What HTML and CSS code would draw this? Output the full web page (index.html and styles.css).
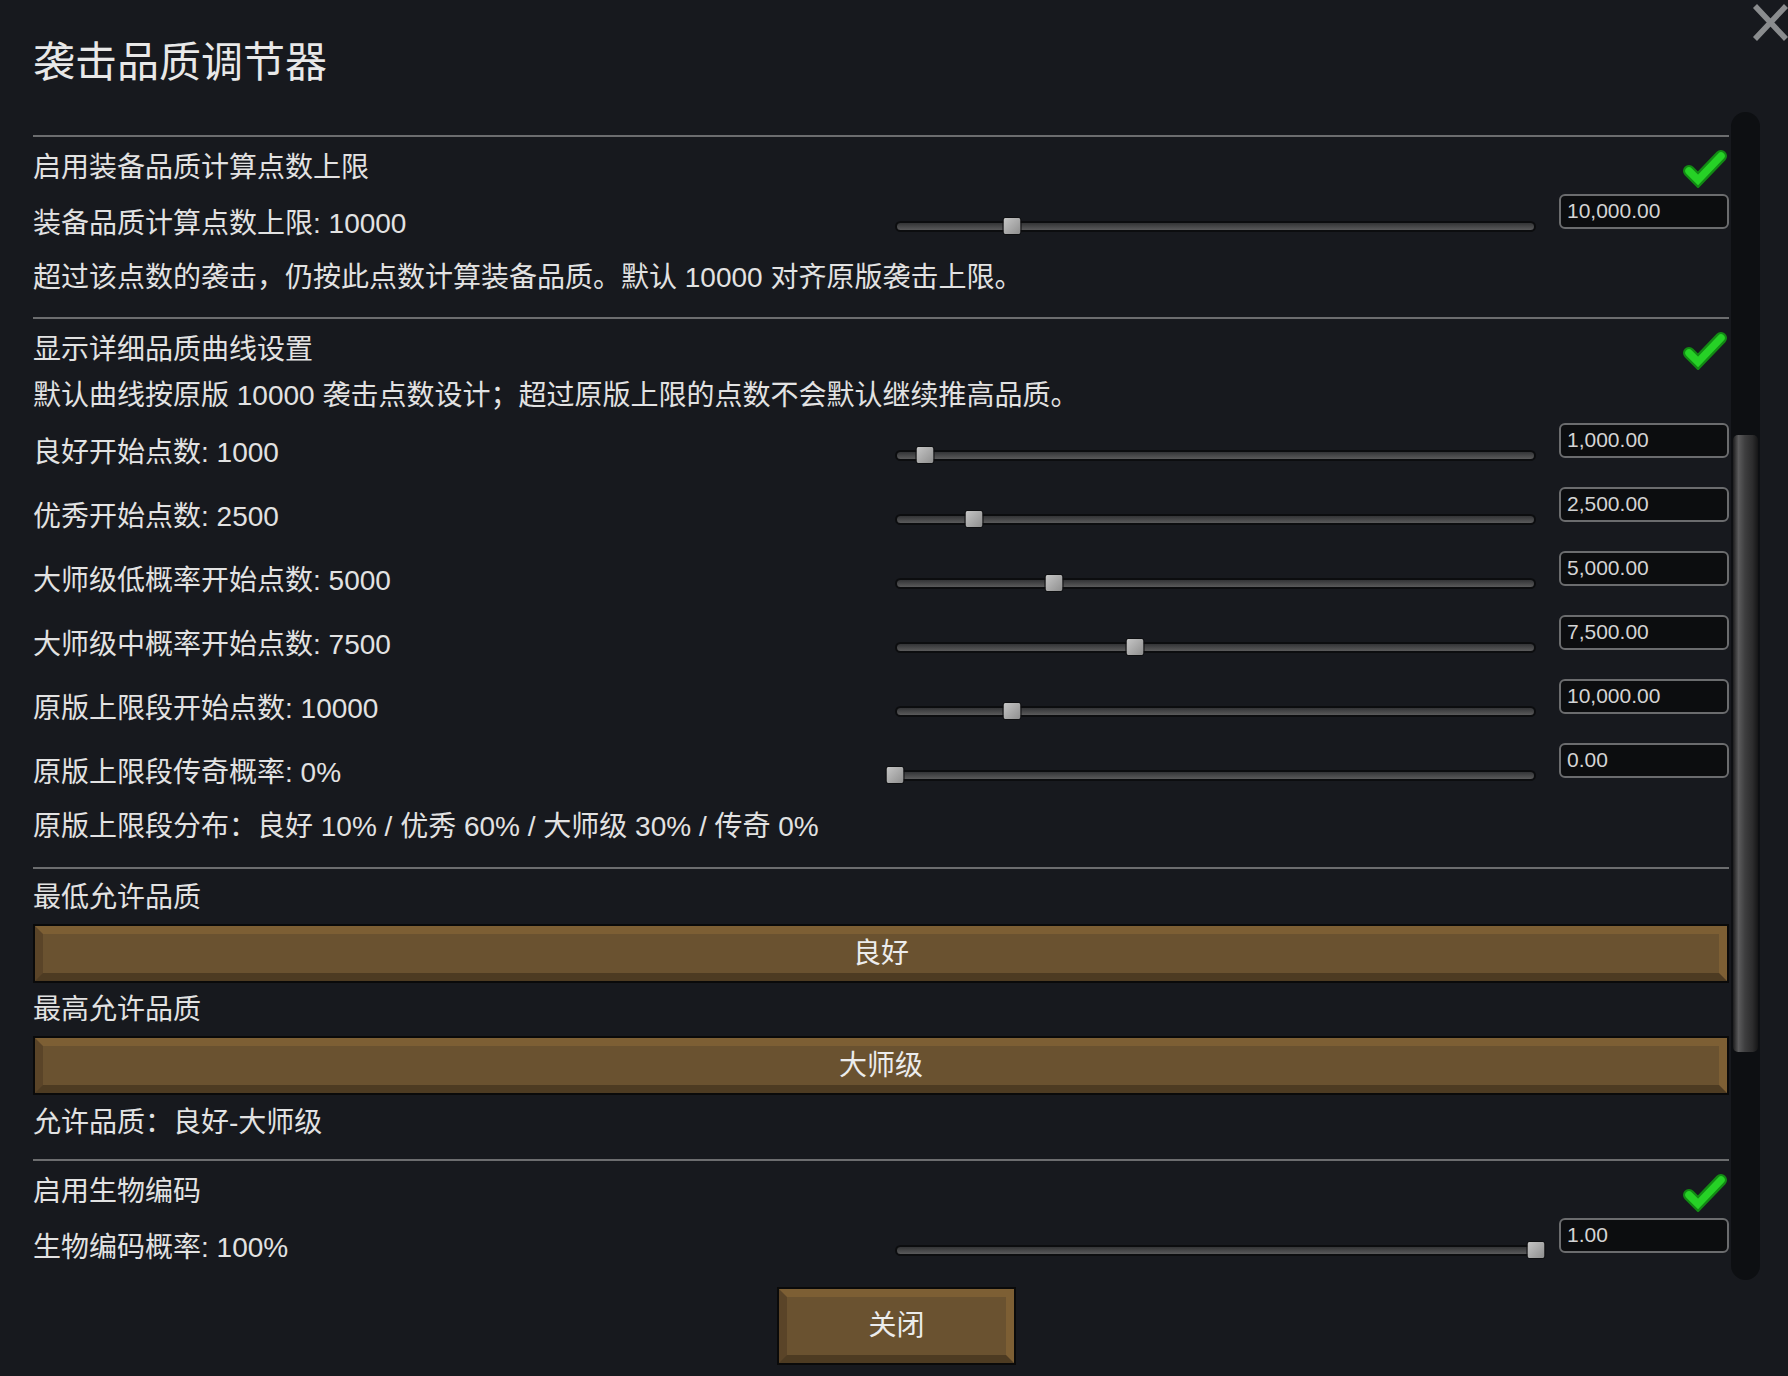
FILE: index.html
```html
<!DOCTYPE html>
<html lang="zh-CN">
<head>
    <meta charset="UTF-8">
    <title>袭击品质调节器</title>
    <link rel="stylesheet" href="styles.css">
</head>
<body>
    <div class="window">
        <svg class="close-x" width="36" height="38" viewBox="0 0 36 38">
            <path d="M3 3 L34 36 M34 3 L3 36" stroke="#8a8c8e" stroke-width="5.5" fill="none"/>
        </svg>

        <h1 class="title">袭击品质调节器</h1>

        <div class="scroll-view">
            <div class="listing">
                <div class="divider first"></div>

                <div class="check-row">
                    <span>启用装备品质计算点数上限</span>
                    <svg class="check" width="46" height="40" viewBox="0 0 46 40">
                        <polyline points="7,23 16,32 39,8" stroke="#128a14" stroke-width="12" stroke-linecap="round" stroke-linejoin="miter" fill="none"/>
                        <polyline points="7,23 16,32 39,8" stroke="#26d126" stroke-width="7.5" stroke-linecap="round" stroke-linejoin="miter" fill="none"/>
                    </svg>
                </div>

                <div class="slider-row">
                    <span class="slider-label">装备品质计算点数上限: 10000</span>
                    <div class="slider"><div class="track"></div><div class="thumb" style="left: 18.2%"></div></div>
                    <div class="num-field">10,000.00</div>
                </div>

                <div class="desc">超过该点数的袭击，仍按此点数计算装备品质。默认 10000 对齐原版袭击上限。</div>

                <div class="divider"></div>

                <div class="check-row">
                    <span>显示详细品质曲线设置</span>
                    <svg class="check" width="46" height="40" viewBox="0 0 46 40">
                        <polyline points="7,23 16,32 39,8" stroke="#128a14" stroke-width="12" stroke-linecap="round" stroke-linejoin="miter" fill="none"/>
                        <polyline points="7,23 16,32 39,8" stroke="#26d126" stroke-width="7.5" stroke-linecap="round" stroke-linejoin="miter" fill="none"/>
                    </svg>
                </div>

                <div class="curve-note">默认曲线按原版 10000 袭击点数设计；超过原版上限的点数不会默认继续推高品质。</div>

                <div class="slider-row">
                    <span class="slider-label">良好开始点数: 1000</span>
                    <div class="slider"><div class="track"></div><div class="thumb" style="left: 4.7%"></div></div>
                    <div class="num-field">1,000.00</div>
                </div>
                <div class="slider-row">
                    <span class="slider-label">优秀开始点数: 2500</span>
                    <div class="slider"><div class="track"></div><div class="thumb" style="left: 12.3%"></div></div>
                    <div class="num-field">2,500.00</div>
                </div>
                <div class="slider-row">
                    <span class="slider-label">大师级低概率开始点数: 5000</span>
                    <div class="slider"><div class="track"></div><div class="thumb" style="left: 24.8%"></div></div>
                    <div class="num-field">5,000.00</div>
                </div>
                <div class="slider-row">
                    <span class="slider-label">大师级中概率开始点数: 7500</span>
                    <div class="slider"><div class="track"></div><div class="thumb" style="left: 37.4%"></div></div>
                    <div class="num-field">7,500.00</div>
                </div>
                <div class="slider-row">
                    <span class="slider-label">原版上限段开始点数: 10000</span>
                    <div class="slider"><div class="track"></div><div class="thumb" style="left: 18.2%"></div></div>
                    <div class="num-field">10,000.00</div>
                </div>
                <div class="slider-row">
                    <span class="slider-label">原版上限段传奇概率: 0%</span>
                    <div class="slider"><div class="track"></div><div class="thumb" style="left: 0%"></div></div>
                    <div class="num-field">0.00</div>
                </div>

                <div class="dist-note">原版上限段分布：良好 10% / 优秀 60% / 大师级 30% / 传奇 0%</div>

                <div class="divider"></div>

                <div class="quality-label first">最低允许品质</div>
                <div class="btn quality-btn">良好</div>
                <div class="quality-label">最高允许品质</div>
                <div class="btn quality-btn">大师级</div>
                <div class="allowed">允许品质：良好-大师级</div>

                <div class="divider tight"></div>

                <div class="check-row">
                    <span>启用生物编码</span>
                    <svg class="check" width="46" height="40" viewBox="0 0 46 40">
                        <polyline points="7,23 16,32 39,8" stroke="#128a14" stroke-width="12" stroke-linecap="round" stroke-linejoin="miter" fill="none"/>
                        <polyline points="7,23 16,32 39,8" stroke="#26d126" stroke-width="7.5" stroke-linecap="round" stroke-linejoin="miter" fill="none"/>
                    </svg>
                </div>

                <div class="slider-row">
                    <span class="slider-label">生物编码概率: 100%</span>
                    <div class="slider"><div class="track"></div><div class="thumb" style="left: 100%"></div></div>
                    <div class="num-field">1.00</div>
                </div>
            </div>

            <div class="scrollbar">
                <div class="scroll-thumb"></div>
            </div>
        </div>

        <div class="footer">
            <div class="btn close-btn">关闭</div>
        </div>
    </div>
</body>
</html>
```

FILE: styles.css
```css
body {
    margin: 0;
    padding: 0;
    background-color: #17191e;
    color: #e2e2e2;
    font-family: "Liberation Sans", "Noto Sans CJK SC", sans-serif;
    font-size: 28px;
}
.window {
    position: relative;
    width: 1788px;
    height: 1376px;
    padding-left: 33px;
    box-sizing: border-box;
    overflow: hidden;
}
.close-x {
    position: absolute;
    top: 3px;
    right: 0;
}
.title {
    margin: 0;
    height: 112px;
    padding-top: 38px;
    box-sizing: border-box;
    font-size: 42px;
    font-weight: normal;
    line-height: 50px;
    color: #e8e8e8;
}
.scroll-view {
    display: flex;
    height: 1168px;
    overflow: hidden;
}
.listing {
    width: 1696px;
    flex-shrink: 0;
}
.divider {
    height: 2px;
    margin-top: 20px;
    background-color: #6c6d6f;
}
.divider.first {
    margin-top: 23px;
}
.divider.tight {
    margin-top: 14px;
}
.check-row {
    display: flex;
    justify-content: space-between;
    align-items: center;
    height: 57px;
    padding-bottom: 2px;
    box-sizing: border-box;
}
.check {
    display: block;
    margin-top: 6px;
    margin-right: 1px;
}
.slider-row {
    display: flex;
    height: 64px;
}
.slider-label {
    flex: 0 0 862px;
    align-self: center;
    margin-bottom: 11px;
    white-space: nowrap;
}
.slider {
    position: relative;
    flex: 0 0 641px;
    display: flex;
    align-items: center;
}
.track {
    width: 100%;
    height: 11px;
    box-sizing: border-box;
    border: 2px solid #0c0d0f;
    border-radius: 6px;
    background: linear-gradient(#333436, #5a5a5b);
}
.thumb {
    position: absolute;
    top: 50%;
    width: 19px;
    height: 18px;
    box-sizing: border-box;
    transform: translate(-50%, -50%);
    border: 1px solid #0e0f11;
    border-radius: 3px;
    background: linear-gradient(135deg, #c6c6c6, #8e8e8e);
}
.num-field {
    flex: 0 0 170px;
    height: 35px;
    margin-left: 23px;
    box-sizing: border-box;
    padding-left: 6px;
    border: 2px solid #6b6c6e;
    border-radius: 6px;
    background-color: #0c0d0f;
    color: #d4d4d4;
    font-size: 21px;
    line-height: 30px;
}
.desc {
    line-height: 39px;
    white-space: nowrap;
}
.curve-note {
    line-height: 40px;
    margin-bottom: 7px;
    white-space: nowrap;
}
.dist-note {
    line-height: 40px;
    white-space: nowrap;
}
.quality-label {
    line-height: 53px;
}
.quality-label.first {
    margin-top: 2px;
}
.allowed {
    padding-top: 6px;
    line-height: 44px;
}
.btn {
    box-sizing: border-box;
    margin: 2px;
    border-style: solid;
    border-width: 8px;
    border-color: #7d5f34 #7d5f34 #4d3b22 #5a4428;
    box-shadow: 0 0 0 2px #0a0a0a;
    background-color: #6a5230;
    color: #ececec;
    text-align: center;
}
.quality-btn {
    height: 55px;
    line-height: 39px;
}
.scrollbar {
    flex: 0 0 29px;
    margin-left: 2px;
    box-sizing: border-box;
    padding: 0 2px;
    border-radius: 15px;
    background-color: #0d0f12;
}
.scroll-thumb {
    margin-top: 323px;
    height: 617px;
    border-radius: 5px;
    background: linear-gradient(to right, #1c1c1d, #5b5b5c 22%, #3e3e3f 48%, #2c2c2d 78%, #161617);
}
.footer {
    display: flex;
    justify-content: center;
    margin-top: 7px;
    margin-left: -28px;
}
.close-btn {
    width: 235px;
    height: 74px;
    line-height: 58px;
}
```
